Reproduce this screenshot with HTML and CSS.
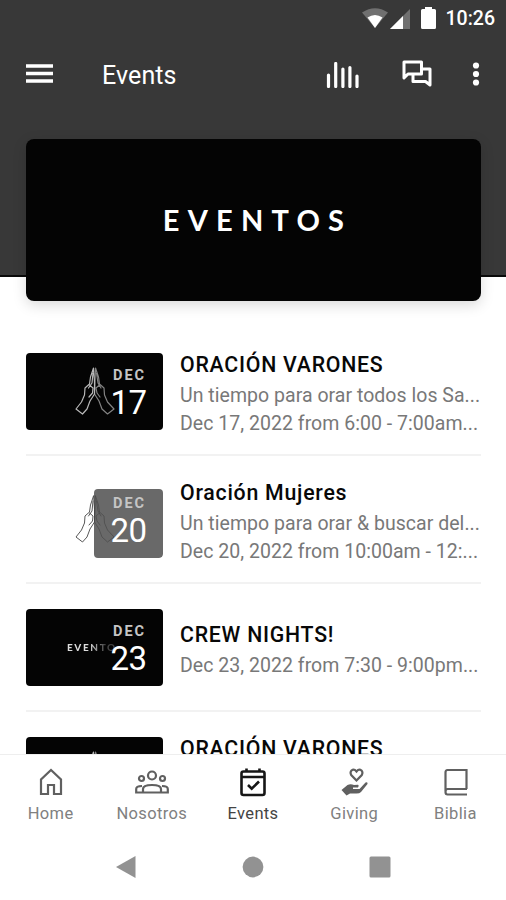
FILE: index.html
```html
<!DOCTYPE html>
<html lang="es">
<head>
<meta charset="utf-8">
<title>Events</title>
<link rel="stylesheet" href="styles.css">
</head>
<body>
<svg class="defs" width="0" height="0">
  <symbol id="hands" viewBox="0 0 42 50">
    <g fill="none" stroke-linejoin="round" stroke-linecap="round">
      <path d="M19.500 2L16.500 11L15.500 18L11 22L10.500 29L7.500 36L2 43L8.500 48L13 43L16 35L20.500 28L20.500 16Z M19 7L18 17L14.500 22 M15.500 19L19 22L18.500 27L15 31"/>
      <path class="hand-right" d="M21.500 2L24.500 11L25.500 18L30 22L30.500 29L33.500 36L40 43L33.500 48L28 43L25 35L20.500 28L21 16Z M22.500 7L24 17L27 22 M25.500 19L22 22L23 27L26 31"/>
    </g>
  </symbol>
</svg>
<div class="screen">
  <header class="header">
    <div class="status">
      <svg class="wifi" viewBox="0 0 26 20"><path d="M0 4.500Q13-4 26 4.500L13 20Z" fill="#707070"/><path d="M5.500 9.500Q13 4.500 20.500 9.500L13 20Z" fill="#fff"/></svg>
      <svg class="signal" viewBox="0 0 20 20"><path d="M0 20L20 0V20Z" fill="#707070"/><path d="M0 20L13 7V20Z" fill="#fff"/></svg>
      <svg class="battery" viewBox="0 0 15 22"><path d="M4 0H11V2H13.500Q15 2 15 3.500V20.500Q15 22 13.500 22H1.500Q0 22 0 20.500V3.500Q0 2 1.500 2H4Z" fill="#fff"/></svg>
      <span class="clock">10:26</span>
    </div>
    <div class="toolbar">
      <svg class="menu" viewBox="0 0 27 20"><path d="M0 2H27M0 9.500H27M0 17H27" stroke="#fff" stroke-width="3.400"/></svg>
      <h1 class="heading">Events</h1>
      <svg class="bars" viewBox="0 0 34 26"><path d="M2.500 13V24.500M9.700 1.500V24.500M16.900 7V24.500M23.900 5.500V24.500M31 14V24.500" stroke="#fff" stroke-width="3.200" stroke-linecap="round"/></svg>
      <svg class="chat" viewBox="0 0 30 28"><path d="M2 2H19.500V14H6L2 18Z M19.500 9H28V25L23.500 21.500H11V14" fill="none" stroke="#fff" stroke-width="3" stroke-linejoin="round"/></svg>
      <svg class="more" viewBox="0 0 8 24"><g fill="#fff"><circle cx="4" cy="3.500" r="3.100"/><circle cx="4" cy="12" r="3.100"/><circle cx="4" cy="20.500" r="3.100"/></g></svg>
    </div>
  </header>
  <section class="banner"><span class="banner-text">EVENTOS</span></section>
  <main class="list">
    <article class="event">
      <div class="thumb"><svg class="hands"><use href="#hands"/></svg>
        <div class="date"><span class="month">DEC</span><span class="day">17</span></div></div>
      <div class="info"><h2 class="title">ORACIÓN VARONES</h2><p class="line">Un tiempo para orar todos los Sa...</p><p class="line">Dec 17, 2022 from 6:00 - 7:00am...</p></div>
    </article>
    <article class="event">
      <div class="thumb light"><svg class="hands"><use href="#hands"/></svg>
        <div class="date"><span class="month">DEC</span><span class="day">20</span></div></div>
      <div class="info"><h2 class="title">Oración Mujeres</h2><p class="line">Un tiempo para orar &amp; buscar del...</p><p class="line">Dec 20, 2022 from 10:00am - 12:...</p></div>
    </article>
    <article class="event">
      <div class="thumb"><span class="mini">EVENTO</span>
        <div class="date"><span class="month">DEC</span><span class="day">23</span></div></div>
      <div class="info short"><h2 class="title">CREW NIGHTS!</h2><p class="line">Dec 23, 2022 from 7:30 - 9:00pm...</p></div>
    </article>
    <article class="event">
      <div class="thumb"><svg class="hands"><use href="#hands"/></svg></div>
      <div class="info"><h2 class="title">ORACIÓN VARONES</h2></div>
    </article>
  </main>
  <nav class="tabs">
    <a class="tab"><svg viewBox="0 0 34 30"><path d="M7 27V12.500L17 3L27 12.500V27H20V18H14V27Z"/></svg><span>Home</span></a>
    <a class="tab"><svg viewBox="0 0 34 30"><circle cx="17" cy="8.500" r="4"/><circle cx="6.500" cy="11.500" r="2.500"/><circle cx="27.500" cy="11.500" r="2.500"/><path d="M8 25.500V22Q8 18 17 18Q26 18 26 22V25.500ZM8 25.500H1.200V22Q1.200 19 7 19M26 25.500H32.800V22Q32.800 19 27 19"/></svg><span>Nosotros</span></a>
    <a class="tab active"><svg viewBox="0 0 34 30"><path d="M7.500 4.500H26.500Q28.500 4.500 28.500 6.500V26Q28.500 28 26.500 28H7.500Q5.500 28 5.500 26V6.500Q5.500 4.500 7.500 4.500ZM5.500 10H28.500M10.500 1.500V5M23.500 1.500V5M12 18L15.700 21.700L23 14.500"/></svg><span>Events</span></a>
    <a class="tab"><svg viewBox="0 0 34 30"><path d="M19.500 13.500L14.200 8Q12.800 5.500 14.500 3.500Q17 1.500 19.500 4.500Q22 1.500 24.500 3.500Q26.200 5.500 24.800 8Z"/><path class="solid" d="M4.500 23L10.500 18Q13.500 16.500 17 18L21 17.700Q22.500 18.500 21 20.500H16V22H22.500L28.500 15.500Q31 14.500 30.500 17L24 25Q22.500 26.500 19.500 26.500H13L9.500 28.500Z"/></svg><span>Giving</span></a>
    <a class="tab"><svg viewBox="0 0 34 30"><path d="M28.500 22V3H9.500Q7.500 3 7.500 5.500V24M29 22H9.500Q7.500 22 7.500 25Q7.500 27.500 9.500 27.500H29"/></svg><span>Biblia</span></a>
  </nav>
  <div class="system">
    <svg viewBox="0 0 24 24"><path d="M2 12L21.500 1V23Z"/></svg>
    <svg viewBox="0 0 24 24"><circle cx="12" cy="12" r="10.400"/></svg>
    <svg viewBox="0 0 24 24"><rect x="1.500" y="1.500" width="21" height="21" rx="1.500"/></svg>
  </div>
</div>
</body>
</html>
```
FILE: styles.css
```css
* { box-sizing: border-box; margin: 0; padding: 0; }
body { background: #fff; font-family: Roboto, "Liberation Sans", sans-serif; }
.defs { display: block; }
.screen { width: 506px; height: 900px; overflow: hidden; display: flex; flex-direction: column; }
.header { height: 277px; flex: none; background: #383838; border-bottom: 2px solid #0a0a0a; color: #fff; }
.status { height: 40px; display: flex; justify-content: flex-end; align-items: center; padding: 0 11px 3px 0; }
.wifi { width: 26px; height: 20px; margin-right: 2px; margin-top: -1px; }
.signal { width: 20px; height: 20px; margin-right: 11px; margin-top: 0; }
.battery { width: 15px; height: 22px; margin-right: 10px; margin-top: -1px; }
.clock { font-size: 19.500px; font-weight: 500; line-height: 22px; padding-top: 1px; }
.toolbar { height: 68px; display: flex; align-items: center; padding: 0 26px 0 26px; }
.menu { width: 27px; height: 20px; margin-right: 49px; }
.heading { font-size: 25px; font-weight: 400; flex: 1; letter-spacing: .1px; padding-top: 2px; }
.bars { width: 34px; height: 26px; margin-right: 42px; margin-top: 2px; }
.chat { width: 30px; height: 28px; margin-right: 40px; }
.more { width: 8px; height: 24px; }
.banner { width: 455px; height: 162px; flex: none; margin: -138px 0 0 26px; border-radius: 8px; background: #040404; box-shadow: 0 4px 14px rgba(0,0,0,.15); display: flex; align-items: center; justify-content: center; }
.banner-text { color: #fff; font: 700 29px/34px Lato, sans-serif; letter-spacing: 8.200px; margin-right: -8px; }
.list { flex: 1; min-height: 0; overflow: hidden; padding: 27px 26px 0 26px; }
.event { width: 455px; height: 128px; border-bottom: 2px solid #f2f2f2; display: flex; align-items: center; }
.thumb { width: 137px; height: 77px; flex: none; border-radius: 4px; background: #040404; position: relative; overflow: hidden; display: flex; justify-content: flex-end; }
.thumb.light { background: #fff; }
.light .date { background: #696969; }
.hands { position: absolute; left: 48px; top: 13px; width: 42px; height: 50px; stroke: #b8b8b8; stroke-width: 1.200; z-index: 1; }
.hand-right { opacity: .7; }
.light .hands { stroke: #444; stroke-width: .9; z-index: 3; }
.light .hand-right { opacity: 1; }
.date { width: 69px; height: 69px; margin-top: 8px; border-radius: 4px; color: #fff; display: flex; flex-direction: column; align-items: center; padding-top: 6px; position: relative; z-index: 2; }
.month { font-size: 14.500px; line-height: 17px; font-weight: 700; letter-spacing: 2px; margin-right: -2px; color: #c5c5c5; }
.day { font-size: 33px; line-height: 38px; letter-spacing: -.6px; }
.mini { position: absolute; left: 41px; top: 31px; font: 900 10px/14px Lato, sans-serif; letter-spacing: 1.600px; color: transparent; background: linear-gradient(90deg, #ddd 45%, #444 75%); background-clip: text; -webkit-background-clip: text; }
.info { margin-left: 17px; height: 82px; white-space: nowrap; }
.info.short { height: 54px; }
.title { font-size: 21.300px; line-height: 28px; height: 32px; padding-top: 1px; letter-spacing: .75px; font-weight: 500; color: #080808; }
.line { font-size: 19.500px; line-height: 28px; letter-spacing: .03px; color: #787878; font-weight: 400; }
.tabs { height: 80px; flex: none; background: #fff; border-top: 1px solid #eee; display: flex; }
.tab { flex: 1; display: flex; flex-direction: column; align-items: center; padding-top: 12px; font-size: 16.500px; line-height: 24px; color: #808080; letter-spacing: .35px; }
.tab svg { width: 34px; height: 30px; margin-bottom: 5px; fill: none; stroke: #606060; stroke-width: 2.200; }
.tab svg .solid { fill: #606060; stroke: none; }
.tab.active { color: #444; }
.tab.active svg { stroke: #161616; stroke-width: 2.600; }
.system { height: 66px; flex: none; display: flex; padding-left: 114px; gap: 103px; align-items: flex-start; padding-top: 21px; }
.system svg { width: 24px; height: 24px; fill: #929292; }
```
